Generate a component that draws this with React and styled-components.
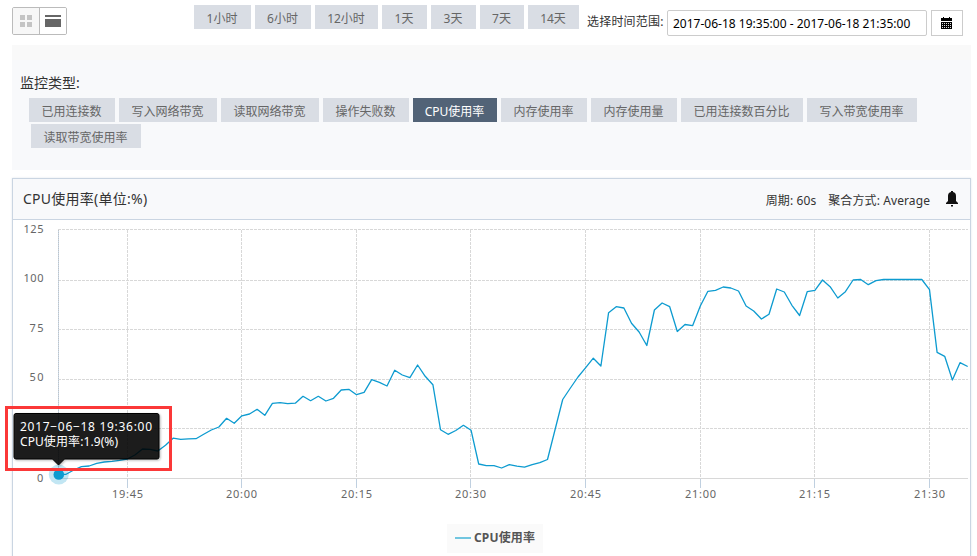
import styled, { createGlobalStyle } from "styled-components";

const GlobalStyle = createGlobalStyle`
  body {
    margin: 0;
    overflow: hidden;
    background: #fff;
    color: #333;
    font: 12px "Noto Sans", "Noto Sans CJK SC", sans-serif;
  }

  * {
    box-sizing: border-box;
  }
`;

const Page = styled.div`
  position: relative;
  width: 977px;
  height: 556px;
  overflow: hidden;
  padding: 5px 6px 0 12px;
`;

const Toolbar = styled.div`
  display: flex;
  align-items: flex-start;
  height: 40px;
`;

const ViewSwitch = styled.div`
  display: flex;
  width: 55px;
  height: 28px;
  margin: 2px 127px 0 0;
  border: 1px solid #bbb;
  border-radius: 2px;
  overflow: hidden;
`;

const ViewButton = styled.div`
  flex: 1;
  display: flex;
  align-items: center;
  justify-content: center;
  background: ${(props) => (props.$muted ? "#f7f7f7" : "#fff")};

  & + & {
    border-left: 1px solid #bbb;
  }

  svg {
    display: block;
  }
`;

const ButtonRow = styled.div`
  display: flex;
  gap: 4px;
  margin-left: ${(props) => props.$indent || 0}px;

  & + & {
    margin-top: 2px;
  }
`;

const TagButton = styled.button`
  width: ${(props) => props.$width}px;
  height: 24px;
  padding: 4px 1px 0 0;
  border: 0;
  text-align: center;
  white-space: nowrap;
  font: inherit;
  line-height: 20px;
  background: ${(props) => (props.$active ? "#526377" : "#d9dde4")};
  color: ${(props) => (props.$active ? "#fff" : "#666")};
`;

const RangeLabel = styled.label`
  width: 80px;
  margin: 8px 0 0 8px;
  line-height: 18px;
  white-space: nowrap;
  letter-spacing: 0.2px;
`;

const RangeInput = styled.input`
  width: 260px;
  height: 26px;
  margin: 5px 4px 0 0;
  padding: 0 5px;
  border: 1px solid #ccc;
  border-radius: 2px;
  outline: 0;
  color: #000;
  font: inherit;
  letter-spacing: 0.01px;
`;

const CalendarButton = styled.button`
  display: flex;
  align-items: center;
  justify-content: center;
  width: 32px;
  height: 26px;
  margin-top: 5px;
  padding: 0 2px 0 0;
  border: 1px solid #ccc;
  background: #fff;
`;

const Metrics = styled.section`
  height: 125px;
  padding: 28px 0 0 8px;
  background: linear-gradient(#f9f9f9 15px, #f8f9fb 15px);
`;

const MetricsTitle = styled.div`
  height: 25px;
  font-size: 14px;
  line-height: 20px;
`;

const Panel = styled.section`
  height: 400px;
  margin-top: 8px;
  border: 1px solid #cad5e2;
  box-shadow: 0 0 2px #dfe5ec;
`;

const PanelHeader = styled.header`
  display: flex;
  align-items: center;
  height: 41px;
  padding: 0 12px 0 10px;
  border-bottom: 1px solid #cad5e2;
  background: #f8f9fb;

  h2 {
    flex: 1;
    margin: 0 0 2px;
    font-size: 14px;
    font-weight: normal;
    letter-spacing: 0.25px;
  }

  span {
    margin-right: 12px;
    padding-top: 1px;
    letter-spacing: 0.1px;
  }

  span:nth-of-type(2) {
    margin-right: 16px;
  }
`;

const Chart = styled.svg`
  display: block;
  overflow: visible;

  .axis {
    fill: #666;
    font-size: 11px;
  }

  .legend {
    fill: #555;
    font-weight: bold;
  }

  .tip {
    fill: #fff;
  }
`;

const Highlight = styled.div`
  position: absolute;
  left: 5px;
  top: 406px;
  width: 167px;
  height: 65px;
  border: 3px solid #fb3838;
`;

const ranges = [
  ["1小时", 57],
  ["6小时", 56],
  ["12小时", 63],
  ["1天", 45],
  ["3天", 45],
  ["7天", 44],
  ["14天", 51],
];

const metrics = [
  ["已用连接数", 86],
  ["写入网络带宽", 98],
  ["读取网络带宽", 98],
  ["操作失败数", 86],
  ["CPU使用率", 84],
  ["内存使用率", 86],
  ["内存使用量", 86],
  ["已用连接数百分比", 122],
  ["写入带宽使用率", 110],
];

const gridLines = [
  [125, 229.5, 233],
  [100, 280.5, 282],
  [75, 329.5, 332],
  [50, 379.5, 381],
  [25, 428.5, 431],
];

const ticks = [
  ["19:45", 127.5],
  ["20:00", 241.5],
  ["20:15", 356.5],
  ["20:30", 470.5],
  ["20:45", 585.5],
  ["21:00", 700.5],
  ["21:15", 814.5],
  ["21:30", 929.5],
];

// one point per minute, 19:36 to 21:35
const levels = [
  474.5, 474.3, 470, 466.7, 466, 463.3, 462, 461.3, 460.3, 459,
  455, 449, 449.3, 451, 445.3, 438.2, 439.3, 438.8, 438.7, 434.3,
  430, 427, 418.3, 423.3, 415.8, 414, 409.3, 415.3, 403.3, 402.7,
  403.7, 403.2, 396.3, 400.7, 396.3, 401, 398.3, 390, 389.3, 394.7,
  392.3, 379.7, 382.3, 386, 370.3, 375, 377.7, 365, 376.3, 384.7,
  429.7, 434.3, 430.5, 425.3, 430.3, 464, 465.7, 465.7, 468, 464.7,
  466.2, 467.2, 464.7, 462.7, 459.5, 429.5, 399.5, 388, 377, 367.7,
  358.2, 366, 312.7, 306.7, 308, 323.3, 332, 345.5, 310, 303,
  306.7, 331.5, 324.5, 325.7, 306, 291.3, 290.3, 287, 288, 291,
  306, 311, 319, 314.3, 289, 292, 305.3, 315.5, 291.7, 290.3,
  280, 286.7, 298, 291.7, 280, 279.5, 284.7, 280.7, 279.5, 279.5,
  279.5, 279.5, 279.5, 279.5, 289.7, 352.3, 356.3, 380, 362.7, 366.5,
];

const line = levels.map((y, i) => `${(58.5 + i * 7.64).toFixed(1)},${y}`).join(" ");

function UsageChart() {
  return (
    <Chart width="957" height="336" viewBox="13 220 957 336">
      <g stroke="#d8d8d8" strokeDasharray="3 1">
        {gridLines.map(([value, y]) => (
          <line key={value} x1="58" x2="968" y1={y} y2={y} />
        ))}
        {ticks.map(([time, x]) => (
          <line key={time} x1={x} x2={x} y1="230" y2="478" />
        ))}
      </g>
      <line x1="58.5" x2="58.5" y1="230" y2="478" stroke="#c8d8e8" />
      <line x1="58.5" x2="58.5" y1="230" y2="478" stroke="#c0c4c8" strokeDasharray="1 1" />
      <line x1="58" x2="968" y1="478.5" y2="478.5" stroke="#d8d8d8" />

      {gridLines.filter(([value]) => value !== 25).map(([value, , y]) => (
        <text
          key={value}
          className="axis"
          x={value < 100 ? 29.5 : 23.5}
          y={y}
          textLength={value < 100 ? 14 : 20}
        >
          {value}
        </text>
      ))}
      <text className="axis" x="37" y="481.500">0</text>
      {ticks.map(([time, x]) => (
        <g key={time}>
          <line x1={x} x2={x} y1="479" y2="488" stroke="#c0d0e0" />
          <text className="axis" x={x - 15.5} y="498" textLength="31">{time}</text>
        </g>
      ))}

      <polyline points={line} fill="none" stroke="#0d9bd0" strokeWidth="1.3" strokeLinejoin="round" />
      <circle cx="58.8" cy="474.5" r="10" fill="#0d9bd0" fillOpacity="0.25" />
      <circle cx="58.8" cy="474.5" r="5.3" fill="#0d9bd0" />

      <rect x="447" y="524" width="96" height="29" fill="#fafafa" />
      <line x1="455" x2="471" y1="538" y2="538" stroke="#71c6e0" strokeWidth="2" />
      <text className="legend" x="474" y="542" textLength="61">CPU使用率</text>

      <path
        d="M16 413.5H157Q159 413.5 159 415.5V457Q159 459 157 459H64.5L58.5 465L52.5 459H16Q14 459 14 457V415.5Q14 413.5 16 413.5Z"
        fill="#000"
        fillOpacity="0.85"
        stroke="#000"
        style={{ filter: "drop-shadow(1px 1px 1px rgba(0, 0, 0, 0.3))" }}
      />
      <text className="tip" x="20" y="431" textLength="132">2017−06−18 19:36:00</text>
      <text className="tip" x="20" y="446" textLength="98">CPU使用率:1.9(%)</text>
    </Chart>
  );
}

function App() {
  return (
    <Page>
      <GlobalStyle />
      <Toolbar>
        <ViewSwitch>
          <ViewButton $muted>
            <svg width="12" height="12" fill="#c4c4c4">
              <path d="M0 0h5v5H0zM7 0h5v5H7zM0 7h5v5H0zM7 7h5v5H7z" />
            </svg>
          </ViewButton>
          <ViewButton>
            <svg width="16" height="12" fill="#666">
              <path d="M0 0h16v2H0zM0 4h16v8H0z" />
            </svg>
          </ViewButton>
        </ViewSwitch>
        <ButtonRow>
          {ranges.map(([name, width]) => (
            <TagButton key={name} $width={width}>{name}</TagButton>
          ))}
        </ButtonRow>
        <RangeLabel>选择时间范围:</RangeLabel>
        <RangeInput readOnly value="2017-06-18 19:35:00 - 2017-06-18 21:35:00" />
        <CalendarButton>
          <svg width="11" height="12" shapeRendering="crispEdges">
            <path d="M2 0h1v1h5V0h1v1h2v3H0V1h2zM0 5h11v7H0z" fill="#000" />
            <path d="M1 6.5h9M1 8.5h9M1 10.5h9" stroke="#ddd" strokeDasharray="1 1" />
          </svg>
        </CalendarButton>
      </Toolbar>

      <Metrics>
        <MetricsTitle>监控类型:</MetricsTitle>
        <ButtonRow $indent={9}>
          {metrics.map(([name, width]) => (
            <TagButton key={name} $width={width} $active={name === "CPU使用率"}>{name}</TagButton>
          ))}
        </ButtonRow>
        <ButtonRow $indent={11}>
          <TagButton $width={110}>读取带宽使用率</TagButton>
        </ButtonRow>
      </Metrics>

      <Panel>
        <PanelHeader>
          <h2>CPU使用率(单位:%)</h2>
          <span>周期: 60s</span>
          <span>聚合方式: Average</span>
          <svg width="12" height="16" fill="#111">
            <path d="M5 0h2v1q3 .5 3 4v5l2 2v1H0v-1l2-2V5q0-3.500 3-4zM5 14h2v1.500H5z" />
          </svg>
        </PanelHeader>
        <UsageChart />
      </Panel>
      <Highlight />
    </Page>
  );
}

export default App;
